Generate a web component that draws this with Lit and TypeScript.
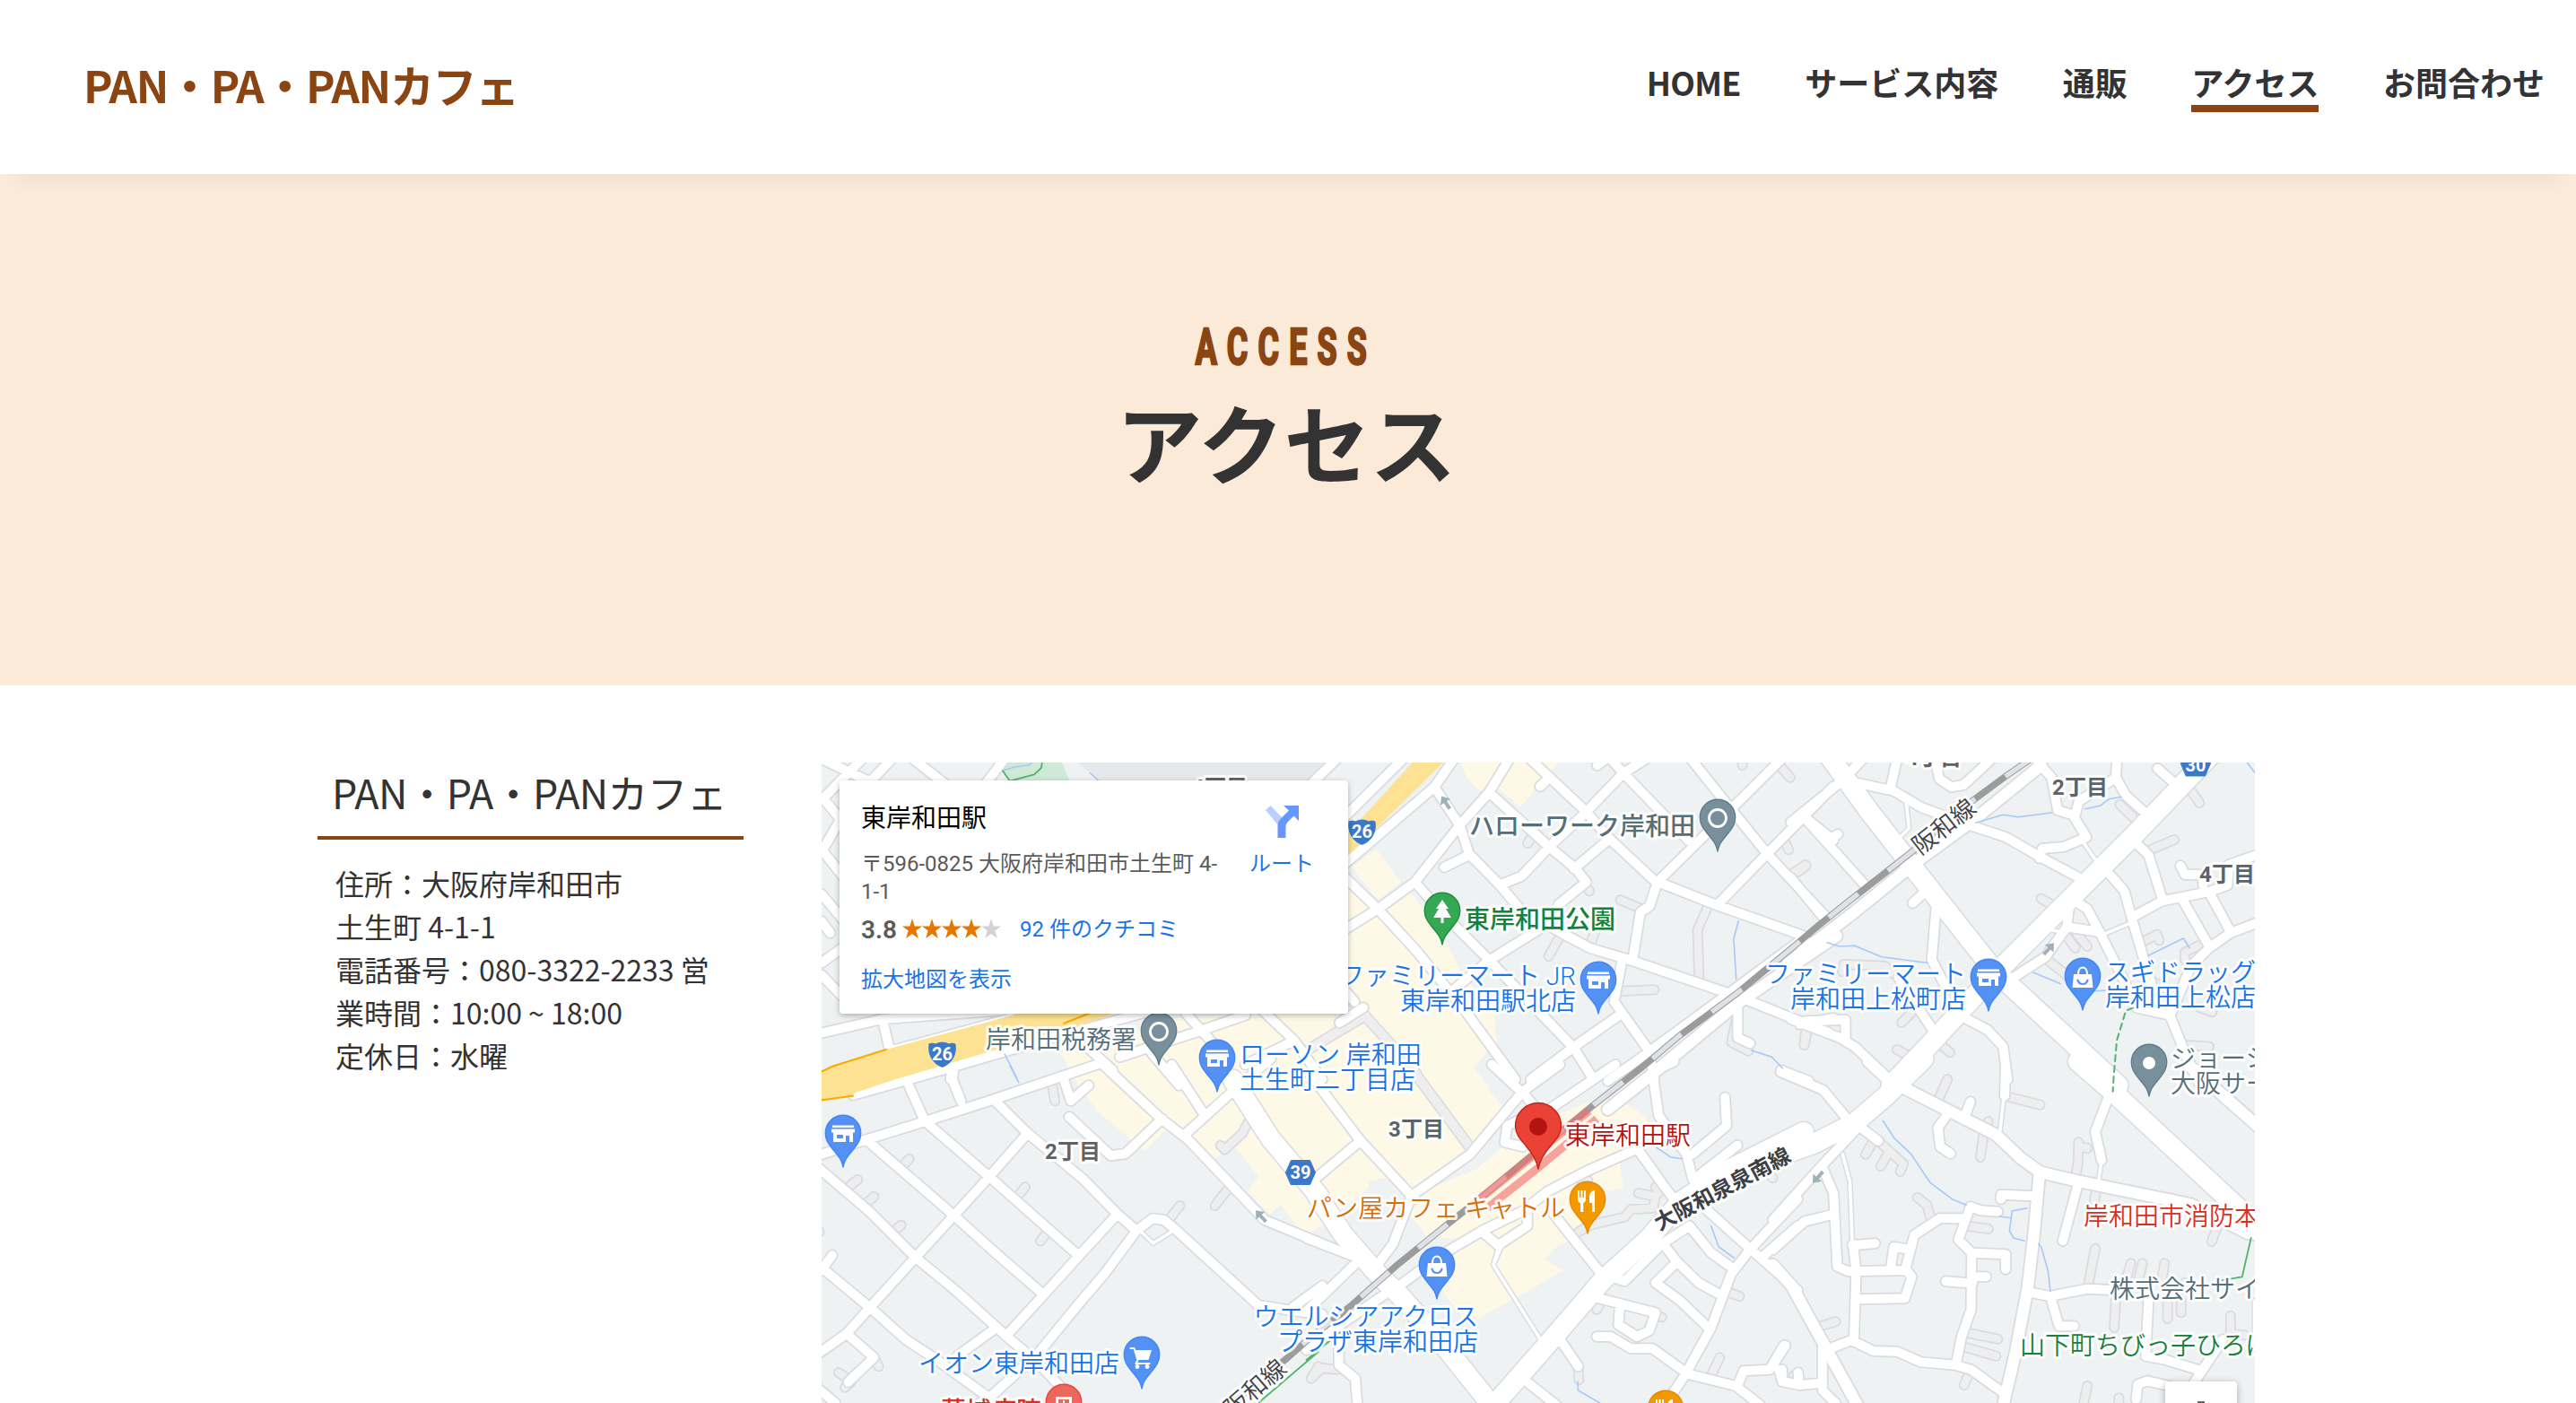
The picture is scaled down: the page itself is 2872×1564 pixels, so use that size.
import { LitElement, html, svg, css } from "lit";
import { customElement, property } from "lit/decorators.js";

type Pt = [number, number];
type Sheet = { ox: number; oy: number; kx: number };

/* The street plan is kept in six sheets, each with its own origin and horizontal scale. */
const SHEETS: Record<string, Sheet> = {
  A: { ox: -6, oy: -10, kx: 2.5705 },
  B: { ox: 584, oy: -10, kx: 2.9037 },
  C: { ox: 1084, oy: -10, kx: 2.9585 },
  D: { ox: -6, oy: 340, kx: 2.8 },
  E: { ox: 544, oy: 340, kx: 2.9037 },
  F: { ox: 1064, oy: 340, kx: 2.8509 },
};

/* "x,y x,y | x,y x,y" in sheet units -> SVG path data in map pixels */
const trace = (sheet: string, lines: string, close = false): string => {
  const s = SHEETS[sheet];
  return lines
    .split("|")
    .map((line) => {
      const pts = line.trim().split(/\s+/).map((p) => p.split(",").map(Number) as Pt);
      return (
        "M" +
        pts.map(([x, y]) => `${(s.ox + x / s.kx).toFixed(1)} ${(s.oy + y / 3).toFixed(1)}`).join("L") +
        (close ? "Z" : "")
      );
    })
    .join("");
};

const plan = (o: Record<string, string>, close = false) =>
  Object.entries(o)
    .map(([k, v]) => trace(k, v, close))
    .join("");

const CREAM = plan(
  {
    A: "700,1000 1050,880 1568,860 1568,1090 740,1090",
    B: "375,30 690,30 635,95 565,180 500,120 430,122 390,75|100,320 180,430 105,490 20,380|-30,400 100,510 210,462 330,640 380,740 480,860 490,960 415,1050 470,1120 -30,1120",
    D: "800,30 1640,-10 1640,480 1540,557 1510,545 1450,460 1415,490 1345,415 1380,365 1310,270 1240,305 1170,240 1090,210 1025,278 880,150",
    E: "-100,-20 500,-20 625,130 530,290 340,440 380,565 330,500 290,360 190,380 195,400 60,510 0,550 -60,400|540,340 700,200 930,105 1010,112 1090,165 1105,230 1005,318 1015,402 930,420 850,575 800,600 762,640 820,680 530,850 490,830 425,740 440,620 550,580 380,565 330,430",
  },
  true,
);

const ALLEYS = plan({
  B: "590,300 610,270|790,460 770,430|890,490 955,518|658,678 690,620|890,795 1000,790|1170,520 1140,590 1145,750|1450,400 1490,372|1420,290 1435,322|1405,40 1440,80|1490,930 1485,975|790,645 810,590|1265,890 1250,965 1305,995|1285,30 1285,40",
  C: "1300,110 1338,165|1075,170 1120,215|1180,320 1255,288|15,395 40,375|815,485 850,505|895,605 928,650|935,605 968,645|835,690 905,745|1160,625 1198,605 1205,625|355,900 400,855|340,990 410,1030|480,970 515,1000|1290,975 1370,980|45,920 35,975|160,730 165,705 300,710 345,750|1340,640 1290,665 1290,690|1180,760 1230,790|1340,850 1380,865",
  D: "95,405 130,375|150,460 180,432|240,550 265,527|270,330 290,305|630,430 652,400|722,550 700,580|735,50 745,112|1100,510 1135,462|1290,400 1245,462|1350,180 1330,220 1275,275 1262,260|180,970 195,1000|70,1020 110,1050 90,1070|-5,550 10,550|1568,1000 1545,1040",
  E: "1065,420 1120,432 1112,470 1040,475 1020,500 915,525 870,550|870,1000 872,1045|1350,750 1392,765|1300,1030 1328,970|1120,830 1140,835|950,770 930,810|870,370 900,375|90,1010 40,1005 5,1040|1120,400 1130,420|1490,360 1500,370|1568,1030 1580,1050",
  F: "545,40 515,110|740,98 840,125|675,180 660,220 650,300|325,245 405,322 395,348|310,245 285,290|355,290 333,330|962,250 960,320 950,385|965,265 990,270|450,435 480,460 492,505|610,530 675,540|1015,605 992,730|1128,655 1110,720|1165,655 1150,720|1235,655 1225,720|1080,780 1075,870|1245,780 1245,840|1288,780 1288,820|1445,830 1445,890 1490,895|190,850 130,868|610,888 705,908|600,935 700,965|615,1020 598,1062|990,1065 978,1122|1400,540 1385,582|1020,400 1012,445|1090,1105 1090,1125|1300,720 1270,760",
});

const LANES = plan({
  C: "1020,605 1115,565|955,298 992,352|370,160 380,250 345,285|850,590 900,600",
  D: "1015,550 1052,588 1108,550",
  E: "612,600 595,660 745,905|620,600 600,650",
  F: "725,95 712,215|1035,310 1025,385|212,290 235,380 243,590|1521,780 1521,900",
});

const STREETS = plan({
  A: "130,20 20,150 70,220 15,330|20,20 155,95|215,20 150,100|280,20 400,130|545,10 480,110|1490,20 1420,100|15,320 90,430|15,470 80,560|15,560 40,600|15,700 75,650|15,740 90,830|15,935 190,888 640,850|190,888 212,1000|212,995 560,885|240,1098 400,1045 620,970 960,860|780,985 850,1060|870,1015 1080,935 1230,875|960,1000 1040,1110|1060,870 1150,985|1280,860 1370,960 1450,1090|1230,1040 1370,960|1500,900 1568,850|390,1050 385,1090",
  B: "190,15 -20,230|350,20 288,112 -20,385|288,112 370,240 400,335 500,440 565,520 700,600 790,650 920,690 1270,812 1568,935|530,20 465,130 370,240 225,430 105,520 -20,600|465,130 660,312 745,385 780,430 690,505 670,560 465,692 350,790|600,20 780,195 850,280 1000,425 1210,510 1490,612|970,20 900,65 780,195 660,312 570,410 500,440|860,20 900,65 1110,290|1120,20 1240,175 1365,335 1550,540|1410,20 1240,195 1010,430 985,510 955,530 930,690|1580,110 1365,335 1210,500|1490,215 1580,290|225,430 310,530 465,690 740,985 800,1085|-20,395 105,520 230,660 380,850 550,1090|895,695 870,830 980,990 1000,1085|880,880 735,985 600,1090|320,380 400,340|740,385 850,290|1490,612 1220,818 960,1015 850,1095|1270,820 1270,950 1310,970|1470,905 1580,885|1410,1060 1500,1095|630,110 655,85|-20,770 30,830|815,40 840,20",
  C: "-10,230 160,90 225,20|340,20 320,110|180,92 330,125 420,180 580,240 700,280 820,350 935,412|40,220 230,435|-10,415 95,545|110,290 145,270|470,40 480,85 520,112 560,105 650,20|805,30 850,80 870,190 920,205 965,280 890,312 820,318 810,350|930,200 940,160 1062,80 1065,20|1062,80 1095,140 1150,190|1200,50 1245,90|1120,290 1170,340 1215,485|1030,390 1090,460 1120,570 1155,690 1185,790|1115,548 1215,493 1370,462 1430,440 1435,372 1530,338|1275,375 1290,405 1350,405 1350,440|1280,485 1370,645|1370,465 1440,595|1530,565 1440,600 1370,650 1310,710 1240,880|920,488 968,520 1010,600 1080,740 1130,850 1240,875 1290,1000 1335,1100|910,500 900,580 1010,597|900,580 830,680 715,755|430,465 392,500|470,500 455,690 505,790|345,750 465,935|-10,888 150,950 200,980 315,1090|40,895 170,890 170,950|565,885 640,925 690,980 705,1090",
  D: "-10,300 160,240 340,180 550,108 890,-15|-10,320 170,485 310,635 440,750 590,895 690,985 800,1110|160,245 430,495 570,630 710,760|340,180 540,365 820,630|555,108 660,220 830,370 940,490 1000,545|660,220 540,365 430,495 310,635 170,800 95,890 -10,970|940,490 820,630 710,760 595,895|1000,545 900,690 820,790 690,960 540,1105 480,1140|1000,545 1050,505 1085,510 1120,540 1380,795 1500,815 1580,825|-10,645 170,805 280,910 380,980 540,1105|550,880 440,965|95,890 180,970 100,1052|285,50 335,170|430,0 425,40 452,112|770,30 795,112 850,60|790,165 920,295 965,288 1080,172|115,92 290,40 420,0|890,-15 1075,170 1160,240 1400,510 1580,590|1110,-10 1210,155|1150,225 1310,70 1420,-30|15,680 50,628|1490,800 1580,730|-10,1060 60,1122",
  E: "590,-10 700,95 750,160|810,-10 690,80 520,290 330,430 270,590 220,660|990,-10 740,165 700,200|1180,-20 1110,15 1130,160 1220,290 1240,370 1285,475 1425,605 1580,745|1345,100 1350,195 1240,290|1385,260 1250,370|680,175 640,195 632,250 690,265 720,240|1065,270 900,345 770,415 690,480 560,545 430,625 290,730|1060,270 1150,400 1210,480|790,490 945,690|705,480 705,530 610,595 560,550|-10,570 165,640 -10,815|225,670 255,710|270,740 100,860 -10,945|95,880 95,995 148,1040 155,1130|165,245 15,375|0,20 165,245 340,440|805,900 870,1000|690,1040 800,1130|975,700 1020,715 1140,590 1230,530 1300,620 1375,675|1145,590 1190,650 1260,720 1330,760|1190,650 1120,720 1200,780 1290,870|930,770 1120,820 1100,880 1060,900 1000,860 1005,790|930,900 975,900 1040,940 1110,940 1225,1025 1380,1065 1460,1130|1385,1065 1405,1015 1490,1010 1535,930|1530,1010 1530,1050 1580,1060|1580,440 1425,610 1365,690 1300,870 1215,1030 1150,1130|1580,530 1470,630|1530,10 1590,40",
  F: "15,15 150,75 225,170|290,-20 355,45|730,-10 727,95|1060,90 1015,215 1035,310|960,390 912,580|715,440 715,425 815,430|-10,510 140,335 270,190|150,340 183,420 195,665 230,682 415,678 432,700 410,772 255,775|-10,610 90,515 185,490|243,595 315,588|245,590 255,680 248,910|160,945 240,912 310,948 385,950 460,985 570,995 620,1010 725,1090|572,995 590,900 620,810 622,620 580,575 618,465 650,478 705,482|590,505 520,505 440,560 410,680|365,670 375,600 415,607|630,620 730,625 730,675|540,715 625,722|630,700 668,700|800,750 870,765 990,740 1080,745|872,765 900,865 948,865|1185,760 1175,965 1230,975 1345,1012|1300,1100 1420,910|1145,1110 1150,1060 1180,1048 1250,1065|540,165 515,200 522,265 555,288|618,115 600,165|275,205 325,245|148,930 148,1080 190,1122|10,1010 20,1050 75,1062 145,1055|70,1020 72,1060|30,930 -10,995",
});

const COLLECTORS = plan({
  C: "815,40 590,225 400,365 200,530 -20,700",
  B: "1590,610 1270,835 990,1075 850,1190",
  F: "400,65 700,225 780,305 840,350 960,380 1320,458 1500,555 1560,560|838,350 820,560 800,740 760,960 722,1130|-10,660 50,730 160,940 262,1135|1310,-10 1570,232",
});

const AVENUES = plan({
  C: "1380,0 1120,275 660,740 460,960 320,1110|110,0 250,195 400,390 660,725 1070,1110",
  D: "1300,40 1420,240 1570,430",
  E: "20,420 110,560 220,690 290,760 420,910 590,1130|1600,215 1350,345 1200,450 1100,570 950,710 800,890 580,1150",
  F: "470,-30 350,95 250,185 120,255 0,300|960,-20 1080,90 1510,510 1580,520",
});

const HIGHWAY = plan(
  {
    A: "0,1070 50,1045 200,990 580,870 780,800 900,800 900,850 780,900 400,1030 220,1092 110,1135 105,1145 0,1162",
    B: "217,30 317,30 100,250 10,340 -80,430 -80,360 10,265",
  },
  true,
);

const HIGHWAY_EDGE = plan({ A: "0,1072 50,1045 200,990|710,902 785,868|0,1162 60,1152 105,1145" });

const WATER = plan({
  A: "540,55 570,45 610,38 620,28|785,65 810,92|540,1005 575,1085",
  B: "1272,560 1257,620 1265,755|1315,993 1380,1015 1415,1052",
  C: "600,232 690,205 740,212 850,198|960,185 1010,175 1040,152 1080,145|110,632 150,645 200,643 290,680 440,700|790,732 880,770|1170,675 1285,618 1305,650|975,795 1030,792|1495,30 1525,70",
  D: "605,-5 632,50",
  E: "1120,265 1170,300 1205,305|1300,530 1325,600 1375,637|868,1050 870,1080 940,1122",
  F: "340,178 375,235 430,290 490,385 560,440 605,460|710,498 748,503 750,480 798,470|748,505 742,545 755,570 790,580|835,590 843,600 865,680 872,748",
});

const TRAILS = plan({
  A: "535,58 555,92 625,70 645,48 648,25",
  D: "1568,950 1380,1122",
  E: "-10,978 100,885",
  F: "1510,570 1482,700 1415,712",
});

const TRAIL_DASHED = plan({ C: "1120,850 1095,860 1065,960 1055,1080 1052,1130" });

const RAIL =
  trace("C", "800,5 700,75 580,165 400,320 300,400 180,495 85,572 0,645") +
  trace("B", "1452,645 1270,800 1080,945 985,1028").replace("M", "L") +
  trace("E", "1075,0 920,125 700,310 550,440 470,505 290,655 130,800 0,905").replace("M", "L") +
  trace("D", "1470,972 1290,1130").replace("M", "L");

const PLATFORMS = plan({ E: "550,440 905,145|575,470 735,340 930,172" });

type PinKind = "ring" | "dot" | "tree" | "store" | "bag" | "cart" | "food" | "hospital";
const PINS: { kind: PinKind; x: number; y: number; tone: string }[] = [
  { kind: "ring", x: 999, y: 99, tone: "slate" },
  { kind: "tree", x: 692, y: 203, tone: "green" },
  { kind: "store", x: 866, y: 280, tone: "blue" },
  { kind: "store", x: 1301, y: 277, tone: "blue" },
  { kind: "bag", x: 1406, y: 276, tone: "blue" },
  { kind: "dot", x: 1480, y: 372, tone: "slate" },
  { kind: "ring", x: 376, y: 337, tone: "slate" },
  { kind: "store", x: 441, y: 367, tone: "blue" },
  { kind: "store", x: 24, y: 451, tone: "blue" },
  { kind: "food", x: 854, y: 525, tone: "orange" },
  { kind: "bag", x: 686, y: 598, tone: "blue" },
  { kind: "cart", x: 357, y: 698, tone: "blue" },
  { kind: "hospital", x: 270, y: 751, tone: "red" },
  { kind: "food", x: 941, y: 758, tone: "orange" },
];

const LABELS: { t: string; x: number; y: number; tone: string; end?: boolean; bold?: boolean; size?: number; turn?: number; mid?: boolean }[] = [
  { t: "ハローワーク岸和田", x: 974, y: 71, tone: "slate", end: true, bold: true },
  { t: "東岸和田公園", x: 717, y: 175, tone: "green", bold: true },
  { t: "ファミリーマート JR", x: 841, y: 238, tone: "blue", end: true },
  { t: "東岸和田駅北店", x: 841, y: 266, tone: "blue", end: true },
  { t: "ファミリーマート", x: 1276, y: 236, tone: "blue", end: true },
  { t: "岸和田上松町店", x: 1276, y: 264, tone: "blue", end: true },
  { t: "スギドラッグ", x: 1431, y: 234, tone: "blue" },
  { t: "岸和田上松店", x: 1431, y: 262, tone: "blue" },
  { t: "ジョーシン", x: 1504, y: 330, tone: "slate" },
  { t: "大阪サービス", x: 1504, y: 358, tone: "slate" },
  { t: "岸和田税務署", x: 351, y: 309, tone: "slate", end: true },
  { t: "ローソン 岸和田", x: 466, y: 326, tone: "blue" },
  { t: "土生町二丁目店", x: 466, y: 354, tone: "blue" },
  { t: "パン屋カフェ キャトル", x: 829, y: 497, tone: "orange", end: true },
  { t: "ウエルシアアクロス", x: 732, y: 618, tone: "blue", end: true },
  { t: "プラザ東岸和田店", x: 732, y: 646, tone: "blue", end: true },
  { t: "イオン東岸和田店", x: 332, y: 670, tone: "blue", end: true },
  { t: "葛城病院", x: 245, y: 723, tone: "red", end: true, bold: true },
  { t: "岸和田市消防本部", x: 1407, y: 506, tone: "red" },
  { t: "株式会社サイト", x: 1436, y: 587, tone: "slate" },
  { t: "山下町ちびっ子ひろば", x: 1336, y: 650, tone: "green" },
  { t: "東岸和田駅", x: 829, y: 416, tone: "crimson" },
  { t: "2丁目", x: 1403, y: 27, tone: "area", size: 24, mid: true },
  { t: "4丁目", x: 1567, y: 124, tone: "area", size: 24, mid: true },
  { t: "4丁目", x: 444, y: 27, tone: "area", size: 24, mid: true },
  { t: "4丁目", x: 1240, y: -6, tone: "area", size: 24, mid: true },
  { t: "2丁目", x: 280, y: 433, tone: "area", size: 24, mid: true },
  { t: "3丁目", x: 663, y: 408, tone: "area", size: 24, mid: true },
  { t: "阪和線", x: 1251, y: 71, tone: "line", size: 27, turn: -38, mid: true },
  { t: "阪和線", x: 483, y: 697, tone: "line", size: 27, turn: -41, mid: true },
  { t: "大阪和泉泉南線", x: 1004, y: 475, tone: "line", size: 24, turn: -28, mid: true, bold: true },
];

const ARROWS: [number, number, number][] = [
  [696, 45, -33],
  [1368, 208, 42],
  [490, 506, -42],
  [1111, 462, 222],
];

const glyph = (kind: PinKind) => {
  switch (kind) {
    case "ring":
      return svg`<circle class="ring" cx="0" cy="-37" r="9.5"/>`;
    case "dot":
      return svg`<circle class="ink" cx="0" cy="-37" r="7"/>`;
    case "tree":
      return svg`<path class="ink" d="M0-50l7 10h-3l6 10h-8.500v6h-3v-6h-8.500l6-10h-3z"/>`;
    case "store":
      return svg`<path class="ink" fill-rule="evenodd" d="M-12-46.500h24v2.500h-24zM-13-42.500h26v4h-2v10.500h-4v-7h-4v7h-14v-10.500h-2zM-7-36v4h7v-4z"/>`;
    case "bag":
      return svg`<path class="ink" d="M-10-40h20l1.500 15h-23z"/><path class="line" d="M-5-40c0-10 10-10 10 0"/><path class="smile" d="M-5.500-33.500c1.500 6 9.500 6 11 0"/>`;
    case "cart":
      return svg`<path class="ink" d="M-8-43h19l-3.500 11h-12z"/><path class="line" d="M-12.500-45h4l4 13-2 4h15"/><circle class="ink" cx="-5" cy="-24.500" r="2.400"/><circle class="ink" cx="6" cy="-24.500" r="2.400"/>`;
    case "food":
      return svg`<path class="ink" d="M-11-48h2v8h1.500v-8h2v8h1.500v-8h2v10c0 2-1.200 3.500-2.700 4v10h-3.200v-10c-2-.500-3.100-2-3.100-4zM8-48v24h-3v-10h-3v-7c0-4 3-7 6-7z"/>`;
    case "hospital":
      return svg`<path class="ink" fill-rule="evenodd" d="M-9-44h18v20h-18zM-6-41v14h12v-14z"/><path class="ink" d="M-1-40h2v3h3v2h-3v3h-2v-3h-3v-2h3z"/>`;
  }
};

@customElement("site-header")
class SiteHeader extends LitElement {
  static styles = css`
    :host { display: block; position: relative; z-index: 2; }
    .bar {
      box-sizing: border-box; height: 194px; padding: 0 35px 0 93px; background: #fff;
      display: flex; align-items: flex-start; justify-content: space-between;
      box-shadow: 0 25px 20px -20px rgba(0, 0, 0, 0.06);
    }
    .logo { margin-top: 58px; font-size: 49px; line-height: 72px; font-weight: 600; letter-spacing: -1.35px; color: #8b4513; white-space: nowrap; }
    .nav { display: flex; gap: 71.5px; margin-top: 65px; }
    .item { font-size: 36px; line-height: 52px; font-weight: 600; color: #333; text-decoration: none; white-space: nowrap; height: 52px; border-bottom: 8px solid transparent; }
    .item.latin { letter-spacing: -0.7px; }
    .item.current { border-color: #8b4513; }
  `;
  render() {
    const items = ["HOME", "サービス内容", "通販", "アクセス", "お問合わせ"];
    return html`<header class="bar">
      <div class="logo">PAN・PA・PANカフェ</div>
      <nav class="nav">
        ${items.map((t) => html`<a class="item ${t === "アクセス" ? "current" : ""} ${t === "HOME" ? "latin" : ""}">${t}</a>`)}
      </nav>
    </header>`;
  }
}

@customElement("page-hero")
class PageHero extends LitElement {
  static styles = css`
    :host { display: block; }
    .hero { height: 570px; background: #fbead8; display: flex; flex-direction: column; align-items: center; box-sizing: border-box; padding: 157px 4px 0 0; }
    .en {
      font-family: Roboto, sans-serif; font-weight: 700; font-size: 56px; line-height: 72px; color: #8b4513;
      letter-spacing: 17.5px; transform: scaleX(0.64); -webkit-text-stroke: 2.6px #8b4513; height: 72px; white-space: nowrap;
    }
    .ja { margin: -2px 0 0; font-size: 96px; line-height: 140px; font-weight: 700; color: #333; }
  `;
  render() {
    return html`<section class="hero">
      <div class="en">ACCESS</div>
      <h1 class="ja">アクセス</h1>
    </section>`;
  }
}

@customElement("shop-info")
class ShopInfo extends LitElement {
  static styles = css`
    :host { display: block; width: 475px; color: #333; }
    .name { margin: 0; font-weight: 400; font-size: 44.8px; letter-spacing: -0.6px; line-height: 66px; padding: 0 0 16px 16px; border-bottom: 4px solid #8b4513; white-space: nowrap; }
    .rows { margin: 0; padding: 24px 0 0 20px; font-size: 32px; line-height: 48px; }
    .row { white-space: nowrap; }
  `;
  render() {
    const rows = ["住所：大阪府岸和田市", "土生町 4-1-1", "電話番号：080-3322-2233 営", "業時間：10:00 ~ 18:00", "定休日：水曜"];
    return html`<h2 class="name">PAN・PA・PANカフェ</h2>
      <div class="rows">${rows.map((r) => html`<div class="row">${r}</div>`)}</div>`;
  }
}

@customElement("place-card")
class PlaceCard extends LitElement {
  @property({ type: Number }) rating = 3.8;
  static styles = css`
    :host { display: block; }
    .card {
      box-sizing: border-box; width: 567px; height: 260px; padding: 22px 32px 0 24px; background: #fff; border-radius: 4px;
      box-shadow: 0 2px 6px rgba(0, 0, 0, 0.28); display: flex; justify-content: space-between;
      font-family: Roboto, "Noto Sans CJK JP", sans-serif; font-size: 24px; line-height: 31px; color: #5b5b5b;
    }
    .text { width: 410px; }
    .title { font-size: 28px; line-height: 42px; color: #000; font-weight: 400; }
    .addr { margin-top: 14px; }
    .rate { display: flex; align-items: center; height: 34px; margin-top: 9px; }
    .score { font-size: 28px; font-weight: 600; width: 46px; }
    .stars { width: 110px; height: 24px; margin-right: 21px; }
    .on { fill: #e77600; }
    .off { fill: #d3d3d3; }
    .link { color: #1a73e8; }
    .more { margin-top: 24px; }
    .route { display: flex; flex-direction: column; align-items: center; width: 84px; padding-top: 6px; color: #1a73e8; }
    .turn { width: 37px; height: 36px; margin-bottom: 14px; }
  `;
  render() {
    const star = "M11 0l2.700 8.400h8.300l-6.700 5.200 2.500 8.400L11 16.900l-6.800 5.100 2.500-8.400L0 8.400h8.300z";
    return html`<div class="card">
      <div class="text">
        <div class="title">東岸和田駅</div>
        <div class="addr">〒596-0825 大阪府岸和田市土生町 4-<br />1-1</div>
        <div class="rate">
          <span class="score">${this.rating}</span>
          <svg class="stars" viewBox="0 0 110 24">
            ${[0, 1, 2, 3, 4].map((i) => svg`<path class=${i < Math.round(this.rating) ? "on" : "off"} transform="translate(${i * 22} 0)" d=${star}/>`)}
          </svg>
          <span class="link">92 件のクチコミ</span>
        </div>
        <div class="more link">拡大地図を表示</div>
      </div>
      <div class="route">
        <svg class="turn" viewBox="0 0 37 36">
          <path fill="#b9d0ff" d="M0 5l5.500-5L19 14l-5 8z" />
          <path fill="#6597ff" d="M20 0h17v17l-5.500-5.500-7 7Q22.500 20.500 22.500 24v12h-9V22q0-4 3-7l9.500-9.500z" />
        </svg>
        <span>ルート</span>
      </div>
    </div>`;
  }
}

@customElement("area-map")
class AreaMap extends LitElement {
  static styles = css`
    :host { display: block; }
    .map { position: relative; width: 1598px; height: 900px; overflow: hidden; background: #eef2f3; }
    .plan { display: block; width: 1598px; height: 900px; }
    .plan path { fill: none; stroke-linejoin: round; stroke-linecap: round; }
    .plan path.fill { stroke: none; }
    .cream { fill: #fef8e7 !important; }
    .park { fill: #ceead6 !important; }
    .shade { fill: #e5e9eb !important; }
    .hwy { fill: #fde293 !important; }
    .case { stroke: #d9dbe0; }
    .road { stroke: #fff; }
    .grey { stroke: #eeeeef; }
    .edge { stroke: #f9ab00; stroke-width: 2.2; }
    .water { stroke: #a6c8fb; stroke-width: 1.6; }
    .trail { stroke: #53b26d; stroke-width: 1.8; }
    .dashed { stroke: #53b26d; stroke-width: 2; stroke-dasharray: 7 5; }
    .rail0 { stroke: #9c9c9c; stroke-width: 7.5; stroke-linecap: butt !important; }
    .rail1 { stroke: #dfe1e8; stroke-width: 5.4; stroke-dasharray: 42 42; stroke-linecap: butt !important; }
    .platform { stroke: #f4706b; stroke-opacity: 0.62; stroke-width: 9; stroke-linecap: butt !important; }
    .arrow { fill: #9fb1b9 !important; }
    .plan path.body { stroke-width: 1.4; }
    .plan path.body.blue { fill: #5491f5; stroke: #4285f4; }
    .plan path.body.slate { fill: #78909c; stroke: #607d8b; }
    .plan path.body.green { fill: #34a853; stroke: #1e8e3e; }
    .plan path.body.orange { fill: #f29900; stroke: #ea8600; }
    .plan path.body.red { fill: #ee675c; stroke: #ea4335; }
    .plan path.ink { fill: #fff; }
    .ink { fill: #fff; }
    .ring { fill: none; stroke: #fff; stroke-width: 2.8; }
    .plan path.line { stroke: #fff; stroke-width: 2.2; }
    .plan path.smile { stroke: #5491f5; stroke-width: 2.2; }
    .plan path.main { fill: #ea4335; stroke: #c5221f; stroke-width: 1.4; }
    .core { fill: #b31412; }
    .label { font-family: Roboto, "Noto Sans CJK JP", sans-serif; font-weight: 350; paint-order: stroke; stroke: #fff; stroke-opacity: 0.9; stroke-width: 6px; stroke-linejoin: round; }
    .label.strong { font-weight: 500; }
    .label.blue { fill: #1a73e8; }
    .label.slate { fill: #546e7a; }
    .label.green { fill: #188038; }
    .label.orange { fill: #d56e0c; }
    .label.red { fill: #d93025; }
    .label.crimson { fill: #b31412; }
    .label.area { fill: #5f6368; font-weight: 700; }
    .label.line { fill: #3c4043; }
    .label.line.strong { font-weight: 700; }
    .plan path.shield { fill: #3a78c8; stroke: #3a78c8; }
    .num { font: 700 20px Roboto, sans-serif; fill: #fff; text-anchor: middle; }
    .card { position: absolute; left: 20px; top: 20px; }
    .zoom { position: absolute; left: 1498px; top: 690px; width: 80px; height: 162px; background: #fff; border-radius: 4px; box-shadow: 0 2px 8px rgba(0, 0, 0, 0.3); display: flex; justify-content: center; }
    .plus { width: 28px; height: 28px; margin-top: 22px; fill: #666; }
  `;
  private road(d: string, w: number, tone = "road") {
    return svg`<path class=${tone} stroke-width=${w} d=${d}/>`;
  }
  render() {
    const cap = "M0 0C-1.500-9-6-13-12-20.500C-16-25.500-19.700-30-19.700-38A19.700 19.700 0 0 1 19.700-38C19.700-30 16-25.500 12-20.500C6-13 1.500-9 0 0Z";
    return html`<div class="map">
      <svg class="plan" viewBox="0 0 1598 900">
        <path class="fill shade" d=${trace("A", "740,20 1480,20 1420,100 820,100", true)}></path>
        <path class="fill park" d=${trace("A", "545,20 700,20 730,100 560,100 530,60", true)}></path>
        <path class="fill cream" d=${CREAM}></path>
        ${this.road(ALLEYS, 12, "case")} ${this.road(ALLEYS, 8.5, "grey")}
        ${this.road(trace("E", "335,10 525,275"), 13, "case")} ${this.road(trace("B", "-20,780 110,930 230,1070"), 13, "case")}
        ${this.road(trace("A", "1410,990 1568,880"), 13, "case")} ${this.road(trace("A", "1410,990 1568,880"), 10, "grey")}
        ${this.road(trace("E", "335,10 525,275"), 10, "grey")} ${this.road(trace("B", "-20,780 110,930 230,1070"), 10, "grey")}
        ${this.road(LANES, 6.5, "case")} ${this.road(STREETS, 13.4, "case")} ${this.road(COLLECTORS, 16, "case")}
        ${this.road(AVENUES, 24.5, "case")} ${this.road(LANES, 3.6)} ${this.road(STREETS, 10)} ${this.road(COLLECTORS, 12.5)}
        ${this.road(AVENUES, 21.5)}
        <path class="fill hwy" d=${HIGHWAY}></path>
        <path class="edge" d=${HIGHWAY_EDGE}></path>
        <path class="water" d=${WATER}></path>
        <path class="trail" d=${TRAILS}></path>
        <path class="dashed" d=${TRAIL_DASHED}></path>
        <path class="rail0" d=${RAIL}></path>
        <path class="rail1" d=${RAIL}></path>
        <path class="platform" d=${PLATFORMS}></path>
        ${ARROWS.map(([x, y, a]) => svg`<path class="fill arrow" transform="translate(${x} ${y}) rotate(${a})" d="M0-9l6.500 8h-4.500v9h-4v-9h-4.500z"/>`)}
        <path class="shield" d="M588 66q4-2 7 0 8-4 15 0 4-2 7 0c2 13-5 22-14.500 25.500c-9.500-3.500-16.500-12.500-14.500-25.500z"></path>
        <text class="num" x="602.500" y="84">26</text>
        <path class="shield" d="M120 314q4-2 7 0 8-4 15 0 4-2 7 0c2 13-5 22-14.500 25.500c-9.500-3.500-16.500-12.500-14.500-25.500z"></path>
        <text class="num" x="134.500" y="332">26</text>
        <path class="shield" d="M517.500 457l6-13.500h21l6 13.500-6 13.500h-21z"></path>
        <text class="num" x="534" y="464">39</text>
        <path class="shield" d="M1515.500 1l6-13.500h21l6 13.500-6 14h-21z"></path>
        <text class="num" x="1532" y="9.500">30</text>
        ${LABELS.map((l) => {
          const size = l.size ?? 28;
          return svg`<text class="label ${l.tone} ${l.bold ? "strong" : ""}" font-size=${size}
            text-anchor=${l.mid ? "middle" : l.end ? "end" : "start"}
            transform="translate(${l.x} ${l.y}) rotate(${l.turn ?? 0})" y=${size * 0.37}>${l.t}</text>`;
        })}
        ${PINS.map((p) => svg`<g transform="translate(${p.x} ${p.y})"><path class="body ${p.tone}" d=${cap}/>${glyph(p.kind)}</g>`)}
        <g transform="translate(799 453)">
          <path class="main" d="M0 0C-2-11-7-18-14-26C-20-33-25.500-39-25.500-48A25.500 25.500 0 0 1 25.500-48C25.500-39 20-33 14-26C7-18 2-11 0 0Z"></path>
          <circle class="core" cx="0" cy="-47" r="10"></circle>
        </g>
      </svg>
      <place-card class="card"></place-card>
      <div class="zoom"><svg class="plus" viewBox="0 0 28 28"><path d="M10 0h8v10h10v8H18v10h-8V18H0v-8h10z" /></svg></div>
    </div>`;
  }
}

@customElement("app-root")
class AppRoot extends LitElement {
  static styles = css`
    :host {
      display: block; height: 1564px; overflow: hidden; background: #fff;
      font-family: "Noto Sans CJK JP", sans-serif; color: #333;
    }
    .access { display: flex; gap: 87px; padding: 86px 0 0 354px; }
  `;
  render() {
    return html`<site-header></site-header>
      <page-hero></page-hero>
      <main class="access">
        <shop-info></shop-info>
        <area-map></area-map>
      </main>`;
  }
}
